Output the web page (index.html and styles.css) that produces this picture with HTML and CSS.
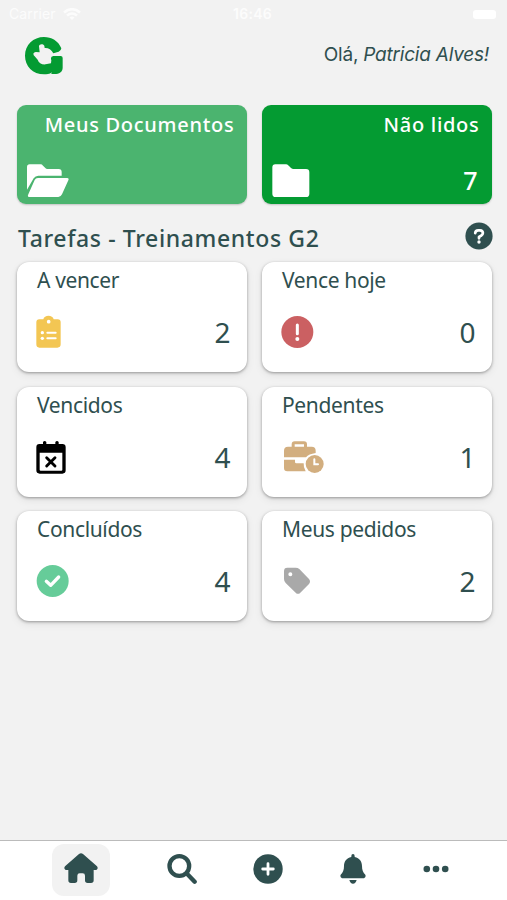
FILE: index.html
```html
<!DOCTYPE html>
<html lang="pt-BR">
<head>
<meta charset="utf-8">
<title>Tarefas</title>
<link rel="stylesheet" href="styles.css">
</head>
<body>
<div class="status">
  <div class="carrier"><span>Carrier</span>
    <svg width="18" height="13" viewBox="0 0 18 13" fill="none" stroke="currentColor" stroke-width="2.6"><path d="M1 4.5Q9-2 17 4.5M4 7.5Q9 3.5 14 7.5"/><path d="M6.5 9.5Q9 7.7 11.5 9.5L9 12Z" fill="currentColor" stroke="none"/></svg>
  </div>
  <time>16:46</time>
  <i class="battery"></i>
</div>
<header class="header">
  <svg class="logo" width="38" height="38" viewBox="75 111 114 114"><path fill="#049b32" d="M132 111C154 111 175 122 184 145Q184 151 176 155L160 160C154 148 144 143 134 144L133 137C128 131 118 132 117 139L119 157L108 156C99 157 98 164 104 169L113 179C116 189 125 194 137 193L153 190L154 181Q150 169 160 168H182Q188 168 188 174V203C188 216 177 222 164 222H154L155 217Q151 222 144 222C103 228 75 202 75 167C75 135 100 111 132 111Z"/></svg>
  <p class="hello">Olá, <em>Patricia Alves!</em></p>
</header>
<main class="main">
  <section class="grid docs">
    <a class="doc doc-light">
      <h2>Meus Documentos</h2>
      <div class="doc-row">
        <svg width="42" height="33" viewBox="83 204 126 99" fill="#fff"><path d="M91 205H124Q128 205 131 209L138 216Q140 219 144 219H178Q187 219 187 228V239H117Q108 239 103 247L83 281V213Q83 205 91 205Z"/><path d="M116 246H203Q210 246 207 253L188 295Q184 303 177 303H90Q83 303 87 295L106 252Q109 246 116 246Z"/></svg>
      </div>
    </a>
    <a class="doc doc-dark">
      <h2>Não lidos</h2>
      <div class="doc-row">
        <svg width="38" height="33" viewBox="56 204 114 99" fill="#fff"><path d="M66 205H99Q103 205 107 210L113 216Q116 219 121 219H158Q168 219 168 229V293Q168 303 158 303H67Q57 303 57 293V214Q57 205 66 205Z"/></svg>
        <b>7</b>
      </div>
    </a>
  </section>
  <div class="title">
    <h1>Tarefas - Treinamentos G2</h1>
    <svg width="28" height="28" viewBox="0 0 28 28"><circle cx="14" cy="14" r="13.6" fill="#2f4f4f"/><path d="M10.2 11.1Q10.4 8.3 13.2 8.3H15Q17.9 8.5 17.9 11.1Q17.9 12.7 16.1 13.7L14 15V16.3" fill="none" stroke="#fff" stroke-width="2.7" stroke-linecap="round" stroke-linejoin="round"/><circle cx="14" cy="20" r="1.7" fill="#fff"/></svg>
  </div>
  <section class="grid tasks">
    <a class="card"><h3>A vencer</h3><div class="row">
      <svg width="26" height="34" viewBox="109 177 78 102"><path fill="#f3c653" d="M119 190H131C133 176 160 176 162 190H174Q183 190 183 199V265Q183 275 173 275H119Q110 275 110 265V199Q110 190 119 190Z"/><g fill="#fff"><circle cx="147" cy="197" r="5.5"/><circle cx="128" cy="230" r="5"/><circle cx="128" cy="247" r="5"/></g><path d="M143 230H168M143 247H168" stroke="#fff" stroke-width="6" stroke-linecap="round"/></svg><b>2</b></div></a>
    <a class="card"><h3>Vence hoje</h3><div class="row">
      <svg width="34" height="34" viewBox="82 179 102 102"><circle cx="131" cy="230" r="48" fill="#cb6062"/><path d="M131 209V235" stroke="#fff" stroke-width="9" stroke-linecap="round"/><circle cx="131" cy="251" r="6" fill="#fff"/></svg><b>0</b></div></a>
    <a class="card"><h3>Vencidos</h3><div class="row">
      <svg width="30" height="34" viewBox="109 180 90 102"><path fill-rule="evenodd" d="M119 192H130V186Q135 180 140 186V192H167V186Q172 180 177 186V192H188Q198 192 198 202V271Q198 281 188 281H120Q110 281 110 271V202Q110 192 119 192ZM120 218V269Q120 272 123 272H185Q188 272 188 269V218Z"/><path d="M141 233L166 258M166 233L141 258" stroke="#000" stroke-width="8.5" stroke-linecap="round"/></svg><b>4</b></div></a>
    <a class="card"><h3>Pendentes</h3><div class="row">
      <svg class="case" width="42" height="34" viewBox="88 174 126 102"><path fill="#d2ae7f" fill-rule="evenodd" d="M114 194V187Q114 178 123 178H151Q160 178 160 187V194H174Q186 194 186 206V213Q165 216 157 226H91V206Q91 194 103 194ZM123 194H151V187H123ZM91 233H124V240Q124 244 128 244H150Q149 257 156 268H101Q91 268 91 258Z"/><circle cx="183" cy="246" r="27" fill="#d2ae7f"/><path d="M182 232V247H193" fill="none" stroke="#fff" stroke-width="6" stroke-linecap="round"/></svg><b>1</b></div></a>
    <a class="card"><h3>Concluídos</h3><div class="row">
      <svg width="34" height="34" viewBox="109 177 102 102"><circle cx="159" cy="228" r="48" fill="#66cc99"/><path d="M140 229L153 241L177 216" fill="none" stroke="#fff" stroke-width="10" stroke-linecap="round" stroke-linejoin="round"/></svg><b>4</b></div></a>
    <a class="card"><h3>Meus pedidos</h3><div class="row">
      <svg width="34" height="34" viewBox="82 177 102 102"><path fill="#a9a9a9" fill-rule="evenodd" d="M101 188H126Q132 188 137 192L166 222Q172 230 166 237L140 263Q133 270 126 263L96 234Q91 229 91 222V198Q91 188 101 188ZM110 202A6 6 0 1 0 110 214A6 6 0 1 0 110 202Z"/></svg><b>2</b></div></a>
  </section>
</main>
<nav class="nav">
  <a class="tab active"><svg width="34" height="32" viewBox="192 69 102 96"><path fill="#2f4f4f" d="M237 72Q243 67 249 72L291 109Q296 116 289 120H281V151Q281 159 273 159H263Q255 159 255 151V137Q255 130 248 130H239Q232 130 232 137V151Q232 159 224 159H213Q205 159 205 151V120H197Q190 116 195 109Z"/></svg></a>
  <a class="tab"><svg width="30" height="30" viewBox="500 70 90 90" fill="none" stroke="#2f4f4f" stroke-linecap="round"><circle cx="537" cy="106" r="29.500" stroke-width="13"/><path d="M560 129L583 153" stroke-width="13"/></svg></a>
  <a class="tab"><svg width="30" height="30" viewBox="0 0 30 30"><circle cx="15" cy="15" r="14.700" fill="#2f4f4f"/><path d="M15 9.700V20.300M9.700 15H20.300" stroke="#fff" stroke-width="2.800" stroke-linecap="round"/></svg></a>
  <a class="tab"><svg width="26" height="30" viewBox="259 70 78 90" fill="#2f4f4f"><path d="M293 76Q293 70 298 70T303 76V79C318 82 325 93 325 106C325 118 328 125 335 132Q338 139 331 143H265Q258 139 261 132C268 125 271 118 271 106C271 93 278 82 293 79ZM287 148H309Q306 159 298 159T287 148Z"/></svg></a>
  <a class="tab"><svg width="26" height="30" viewBox="0 0 26 30" fill="#2f4f4f"><circle cx="3.800" cy="15" r="3.300"/><circle cx="13" cy="15" r="3.300"/><circle cx="22.200" cy="15" r="3.300"/></svg></a>
</nav>
</body>
</html>
```
FILE: styles.css
```css
* { box-sizing: border-box; margin: 0; }
body {
  height: 900px;
  display: flex;
  flex-direction: column;
  background: #f2f2f2;
  color: #2f4f4f;
  font-family: "Noto Sans", sans-serif;
  overflow: hidden;
}
svg { display: block; flex: none; }
.status {
  height: 28px;
  padding: 0 11px 0 9px;
  display: grid;
  grid-template-columns: 1fr auto 1fr;
  align-items: center;
  color: #fcfcfc;
  font: 14px/28px Inter, sans-serif;
}
.carrier { display: flex; align-items: center; gap: 7px; letter-spacing: .1px; }
.status time { font-weight: 600; letter-spacing: .3px; }
.battery { justify-self: end; width: 23px; height: 9px; border-radius: 3px; background: #fff; }
.header {
  height: 77px;
  padding: 9px 18px 0 25px;
  display: flex;
  justify-content: space-between;
  align-items: flex-start;
}
.hello { padding-top: 3.500px; font: 19px/28px Inter, sans-serif; letter-spacing: -0.22px; }
.main { flex: 1; padding: 0 15.5px 0 17px; }
.grid { display: grid; grid-template-columns: 229.5px 229.5px; column-gap: 15.5px; }
.doc {
  height: 98.500px;
  padding: 5px 12px 7px 10px;
  border-radius: 9px;
  display: flex;
  flex-direction: column;
  justify-content: space-between;
  color: #fff;
  box-shadow: 0 1px 2px rgba(0, 0, 0, .2);
}
.doc-light { background: #4bb46f; }
.doc-dark { background: #049b32; }
.doc h2 { text-align: right; font-size: 20px; line-height: 29px; font-weight: 500; letter-spacing: .72px; }
.doc-row { display: flex; justify-content: space-between; align-items: flex-end; }
.doc-row b { padding: 0 2px 3px 0; font-size: 25px; line-height: 27px; font-weight: 500; }
.title {
  height: 58.500px;
  display: flex;
  justify-content: space-between;
  align-items: center;
  padding: 10px 0 0 1px;
}
.title h1 { font-size: 23px; line-height: 32px; font-weight: 500; letter-spacing: .62px; }
.title svg { margin-top: -3px; margin-right: -1px; }
.tasks { row-gap: 14.500px; }
.card {
  height: 110px;
  padding: 4px 16px 0 19px;
  border-radius: 12px;
  background: #fff;
  box-shadow: 0 1px 3px rgba(0, 0, 0, .35), 0 3px 8px rgba(0, 0, 0, .08);
}
.card h3 {
  padding-left: 1px;
  font-size: 21px;
  line-height: 29px;
  font-weight: 400;
  letter-spacing: -0.35px;
  white-space: nowrap;
}
.row { margin-top: 19px; height: 36px; display: flex; align-items: center; justify-content: space-between; }
.row b { font-size: 28px; line-height: 36px; font-weight: 450; }
.case { margin-left: 2px; }
.nav {
  height: 60px;
  border-top: 1px solid #bbb;
  background: #fff;
  padding: 3px 0 0 52px;
  display: grid;
  grid-template-columns: 58px 144px 28px 142px 24px;
}
.tab { height: 52px; border-radius: 12px; display: flex; align-items: center; justify-content: center; }
.tab svg { margin-top: -3px; }
.active { background: #f2f2f2; }
.active svg { margin-top: -2px; }
```
